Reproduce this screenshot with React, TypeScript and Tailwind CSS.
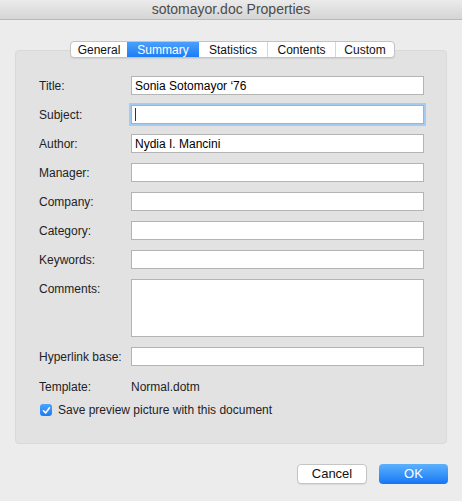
import React from 'react';

const rows = [
  { label: 'Title:', value: 'Sonia Sotomayor \u201876' },
  { label: 'Subject:', value: '', focus: true },
  { label: 'Author:', value: 'Nydia I. Mancini' },
  { label: 'Manager:', value: '' },
  { label: 'Company:', value: '' },
  { label: 'Category:', value: '' },
  { label: 'Keywords:', value: '' },
];

const tabs = ['General', 'Summary', 'Statistics', 'Contents', 'Custom'];
const tabWidths = ['w-[56px]', 'w-[72px]', 'w-[68px]', 'w-[68px]', 'w-[59px]'];

export default function App() {
  return (
    <div className="w-[462px] h-[501px] bg-[#ececec] text-[12px] text-[#222] font-['Liberation_Sans',Arial,sans-serif] overflow-hidden">
      {/* title bar */}
      <div className="h-[20px] bg-gradient-to-b from-[#ebebeb] to-[#d5d5d5] border-b border-[#b9b9b9] flex items-center justify-center text-[14px] text-[#4c4c4c]">
        sotomayor.doc Properties
      </div>

      <div className="relative mx-[15px] mt-[30px] h-[394px] rounded-[4px] bg-[#e2e2e2] border border-[#d9d9d9]">
        {/* tabs */}
        <div className="absolute left-[54px] -top-[10px] flex h-[17px] rounded-[4px] bg-white border border-[#c3c3c3] shadow-[0_1px_1px_rgba(0,0,0,0.08)] overflow-hidden">
          {tabs.map((t, i) => (
            <div
              key={t}
              className={
                tabWidths[i] +
                ' flex items-center justify-center text-[12px] ' +
                (t === 'Summary'
                  ? 'bg-gradient-to-b from-[#4aa0fc] to-[#1b7cf5] text-white'
                  : 'text-[#111] ' + (i > 0 && i !== 2 ? 'border-l border-[#d6d6d6]' : ''))
              }
            >
              {t}
            </div>
          ))}
        </div>

        <div className="pl-[23px] pt-[25px] flex flex-col">
          {rows.map((r) => (
            <div key={r.label} className="flex items-center h-[19px] mb-[10px]">
              <div className="w-[92px]">{r.label}</div>
              <div
                className={
                  'w-[293px] h-[19px] bg-white flex items-center pl-[3px] text-[12px] text-black ' +
                  (r.focus
                    ? 'border border-[#8bb8ec] shadow-[0_0_0_2px_#a6cbf3]'
                    : 'border border-[#b4b4b4]')
                }
              >
                {r.focus ? <span className="w-px h-[13px] bg-[#333]" /> : r.value}
              </div>
            </div>
          ))}
          <div className="flex items-start mb-[10px]">
            <div className="w-[92px] pt-[1px]">Comments:</div>
            <div className="w-[293px] h-[58px] bg-white border border-[#b4b4b4]" />
          </div>
          <div className="flex items-center h-[19px] mb-[13px]">
            <div className="w-[92px]">Hyperlink base:</div>
            <div className="w-[293px] h-[19px] bg-white border border-[#b4b4b4]" />
          </div>
          <div className="flex items-center h-[16px]">
            <div className="w-[92px]">Template:</div>
            <div>Normal.dotm</div>
          </div>
          <div className="flex items-center mt-[8px] ml-[1px] h-[14px]">
            <div className="w-[12px] h-[12px] rounded-[3px] bg-gradient-to-b from-[#4aa3fc] to-[#1a7bf5] flex items-center justify-center">
              <svg width="9" height="9" viewBox="0 0 9 9">
                <path d="M1.5 4.8 L3.6 6.9 L7.5 1.8" stroke="white" strokeWidth="1.6" fill="none" strokeLinecap="round" strokeLinejoin="round" />
              </svg>
            </div>
            <div className="ml-[6px]">Save preview picture with this document</div>
          </div>
        </div>
      </div>

      <div className="flex justify-end gap-[12px] mt-[20px] pr-[14px]">
        <div className="w-[70px] h-[20px] rounded-[4px] bg-white border border-[#c5c5c5] shadow-[0_1px_1px_rgba(0,0,0,0.08)] flex items-center justify-center text-[13px] text-[#111]">
          Cancel
        </div>
        <div className="w-[69px] h-[20px] rounded-[4px] bg-gradient-to-b from-[#5cb1fd] to-[#1176f5] flex items-center justify-center text-[13px] text-white">
          OK
        </div>
      </div>
    </div>
  );
}
